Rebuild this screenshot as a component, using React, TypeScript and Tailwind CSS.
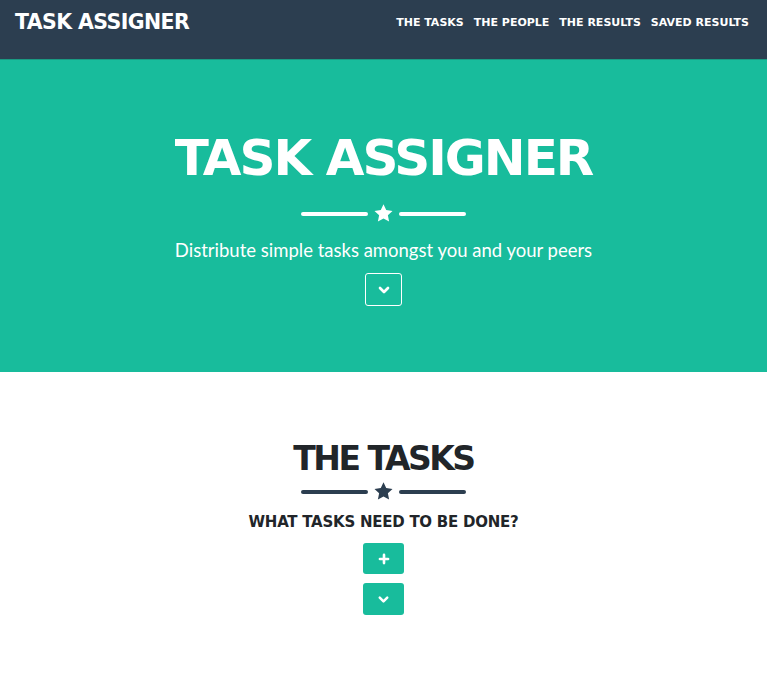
import { ChevronDown, Plus } from "lucide-react";

const heading = { fontFamily: '"DejaVu Sans", "Liberation Sans", sans-serif' };
const body = { fontFamily: 'Lato, "Liberation Sans", sans-serif' };

function StarDivider({ light }: { light?: boolean }) {
  const color = light ? "bg-white" : "bg-[#2c3e50]";
  return (
    <div className="flex items-center justify-center gap-[5px]">
      <div className={`h-[4px] w-[67px] rounded-sm ${color}`} />
      <svg viewBox="0 0 24 24" className={`h-[21px] w-[21px] ${light ? "fill-white" : "fill-[#2c3e50]"}`}>
        <path d="M12 1.5l3.1 6.6 7.2.9-5.3 5 1.4 7.1L12 17.6l-6.4 3.5 1.4-7.1-5.3-5 7.2-.9z" />
      </svg>
      <div className={`h-[4px] w-[67px] rounded-sm ${color}`} />
    </div>
  );
}

export default function App() {
  return (
    <div className="min-h-screen bg-white" style={body}>
      <nav className="flex h-[59px] items-start justify-between bg-[#2c3e50] px-[15px] pt-[10px]">
        <span className="text-[20.5px] leading-[24px] font-bold tracking-[-0.6px] text-white" style={heading}>
          TASK ASSIGNER
        </span>
        <div className="flex gap-[10px] pt-[6px] pr-[3px] text-[11px] leading-[14px] font-bold text-white" style={heading}>
          <span>THE TASKS</span>
          <span>THE PEOPLE</span>
          <span>THE RESULTS</span>
          <span>SAVED RESULTS</span>
        </div>
      </nav>

      <header className="flex h-[313px] flex-col items-center border-t border-[#1a9a82] bg-[#18bc9c] pt-[67px] text-white">
        <h1 className="text-[50px] leading-[62px] font-bold tracking-[-2px]" style={heading}>
          TASK ASSIGNER
        </h1>
        <div className="mt-[14px]">
          <StarDivider light />
        </div>
        <p className="mt-[13px] text-[18.5px] leading-[26px]">Distribute simple tasks amongst you and your peers</p>
        <button className="mt-[10px] flex h-[33px] w-[37px] items-center justify-center rounded-[3px] border border-white">
          <ChevronDown className="h-[16px] w-[16px]" strokeWidth={4} />
        </button>
      </header>

      <section className="flex flex-col items-center pt-[67px]">
        <h2 className="text-[33px] leading-[40px] font-bold tracking-[-2.5px] text-[#212529]" style={heading}>
          THE TASKS
        </h2>
        <div className="mt-[2px]">
          <StarDivider />
        </div>
        <h3 className="mt-[10px] text-[15px] leading-[20px] font-bold tracking-[-0.25px] text-[#212529]" style={heading}>
          WHAT TASKS NEED TO BE DONE?
        </h3>
        <button className="mt-[11px] flex h-[31px] w-[41px] items-center justify-center rounded-[3px] bg-[#18bc9c] text-white">
          <Plus className="h-[14px] w-[14px]" strokeWidth={4.5} />
        </button>
        <button className="mt-[9px] flex h-[32px] w-[41px] items-center justify-center rounded-[3px] bg-[#18bc9c] text-white">
          <ChevronDown className="h-[15px] w-[15px]" strokeWidth={4} />
        </button>
      </section>
    </div>
  );
}
